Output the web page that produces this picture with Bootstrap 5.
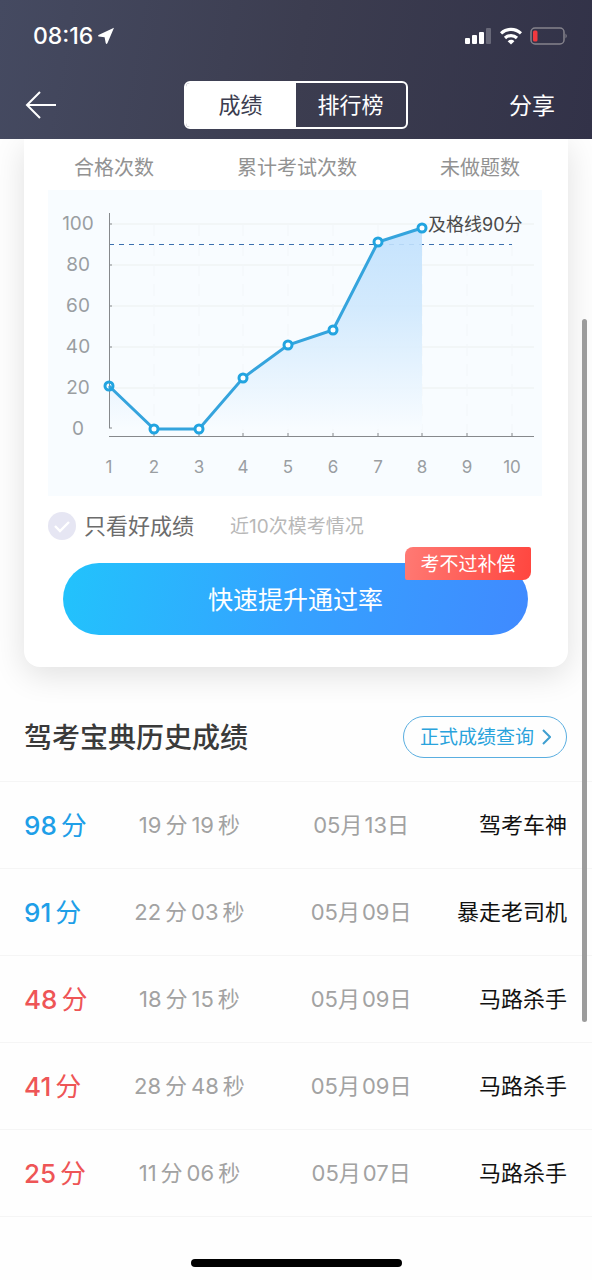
<!DOCTYPE html>
<html lang="zh-CN">
<head>
<meta charset="utf-8">
<meta name="viewport" content="width=device-width, initial-scale=1">
<title>成绩</title>
<link href="https://cdn.jsdelivr.net/npm/bootstrap@5.3.0/dist/css/bootstrap.min.css" rel="stylesheet">
<style>
  body { font-family: Inter, "Noto Sans CJK SC", sans-serif; background: #fefefe; color: #111; overflow-x: hidden; }
  .app-header { background: linear-gradient(100deg, #454a61 0%, #3c3d50 50%, #323248 100%); color: #fff; z-index: 3; }
  .status-bar { height: 72px; padding: 0 24px 0 33px; font-size: 23px; font-weight: 500; }
  .title-bar { height: 67px; padding: 0 26px 2px 25px; font-size: 23px; }
  .title-side { flex: 1 1 0; }
  .title-side a { color: #fff; }
  .title-side svg { display: block; }
  .share-link { display: block; padding-top: 3px; margin-right: 11px; }
  .seg-tabs { border: 2px solid #fff; border-radius: 6px; overflow: hidden; }
  .seg-tabs button { width: 110px; height: 44px; border: 0; background: transparent; color: #fff; font-size: 22px; line-height: 44px; padding: 0; }
  .seg-tabs button.is-active { background: #fff; color: #3c3d50; }
  .score-card { margin: 0 24px; padding: 8px 26px 32px 24px; background: #fff; border-radius: 0 0 16px 16px; box-shadow: 0 8px 32px rgba(0,0,0,.12); }
  .stat-heads { font-size: 20px; line-height: 42px; color: #929292; padding: 0 22px 0 26px; margin-bottom: 1px; }
  .trend-chart { display: block; width: 100%; height: auto; background: #f8fcff; }
  .filter-row { height: 60px; }
  .filter-row label { font-size: 22px; color: #6c6c6c; margin-left: 8px; }
  .filter-row .hint { font-size: 19px; color: #b8b8b8; margin-left: 36px; padding-top: 2px; }
  .round-check { appearance: none; width: 28px; height: 28px; margin: 0; border-radius: 50%; background: #e6e6f3 url("data:image/svg+xml,%3Csvg xmlns='http://www.w3.org/2000/svg' viewBox='0 0 28 28'%3E%3Cpath d='M7 14l5 5 9-9' fill='none' stroke='%23fff' stroke-width='2.4'/%3E%3C/svg%3E"); }
  .round-check:checked { background-color: #22a7f0; }
  .cta-wrap { margin: 7px 14px 0 15px; }
  .btn-cta, .btn-cta:hover { border: 0; border-radius: 36px; height: 72px; padding: 4px 0 0; font-size: 25px; color: #fff; background: linear-gradient(100deg, #22c3fc 0%, #35a2ff 50%, #408aff 100%); }
  .cta-flag { position: absolute; right: -3px; top: -16px; width: 126px; height: 33px; line-height: 35px; font-size: 19px; color: #fff; border-radius: 8px 2px 8px 2px; background: linear-gradient(100deg, #ff7a74, #ff463f); text-align: center; }
  .history-head { padding: 48px 25px 22px 24px; }
  .history-head h2 { font-size: 28px; font-weight: 500; line-height: 42px; padding-top: 2px; color: #3a3a3a; }
  .btn-query { display: flex; align-items: center; gap: 8px; height: 42px; padding: 2px 15px 0 16px; border: 1px solid #5aaee0; border-radius: 21px; color: #2aa3dc; font-size: 19px; text-decoration: none; }
  .btn-query svg { margin-bottom: 2px; }
  .history-table { width: 100%; table-layout: fixed; border-top: 1px solid #f5f5f5; font-size: 22px; }
  .history-table td { height: 87px; padding: 1px 0 0; border-bottom: 1px solid #f5f5f5; vertical-align: middle; white-space: nowrap; }
  .history-table td:first-child { padding-left: 24px; font-size: 26px; }
  .history-table td:last-child { padding-right: 25px; text-align: right; }
  .history-table .meta { color: #a2a2a2; text-align: center; }
  .history-table b { font-weight: inherit; margin-right: 4px; }
  .history-table i { font-style: normal; margin-right: 4px; }
  .history-table .day { margin-right: 2px; }
  .c-score { width: 19%; } .c-time { width: 26%; } .c-date { width: 32%; }
  .pass { color: #1e9fe8; } .fail { color: #ee5556; }
  .pass b, .fail b { font-weight: 500; }
  .home-bar { width: 211px; height: 8px; border-radius: 4px; background: #000; margin: 42px auto 12px; }
  .scroll-thumb { position: absolute; right: 5px; top: 319px; width: 5px; height: 703px; border-radius: 3px; background: #9c9c9c; z-index: 2; }
</style>
</head>
<body>
<div class="position-relative">
<header class="app-header position-relative">
  <div class="status-bar d-flex align-items-center justify-content-between">
    <div class="d-flex align-items-center gap-1">
      <span>08:16</span>
      <svg width="18" height="18" viewBox="0 0 18 18" aria-hidden="true"><path d="M17 .8L1.500 8Q.3 9.300 1.800 9.600L7.600 10.200L8.700 16Q9.300 17.800 10.400 16.200z" fill="#fff"/></svg>
    </div>
    <div class="d-flex align-items-center gap-2">
      <svg width="27" height="18" viewBox="0 0 27 18" fill="#fff" aria-hidden="true"><rect x="0" y="11" width="5" height="6" rx="1"/><rect x="7" y="8" width="5" height="9" rx="1"/><rect x="14" y="5" width="5" height="12" rx="1"/><rect x="21" y="1" width="5" height="16" rx="1" opacity=".25"/></svg>
      <svg width="22" height="18" viewBox="0 0 22 18" fill="none" stroke="#fff" stroke-width="3.200" aria-hidden="true"><path d="M1 6.400C6.800 .9 15.200 .9 21 6.400"/><path d="M5 11c3.400-3.200 8.600-3.200 12 0"/><path d="M7.600 14.200c1.900-1.900 4.900-1.900 6.800 0L11 17.600z" fill="#fff" stroke="none"/></svg>
      <svg width="38" height="18" viewBox="0 0 38 18" fill="none" aria-hidden="true"><rect x="1" y="1" width="33" height="16" rx="4" stroke="#85838c" stroke-width="1.500"/><rect x="3" y="3.500" width="4.500" height="11" rx="1.500" fill="#f0393f"/><path d="M35.500 6.500q2.500 2.500 0 5z" fill="#85838c"/></svg>
    </div>
  </div>
  <nav class="title-bar d-flex align-items-center">
    <div class="title-side"><a href="#" aria-label="返回"><svg width="32" height="28" viewBox="0 0 32 28" fill="none" stroke="#fff" stroke-width="2" aria-hidden="true"><path d="M15 1L2 14l13 13M2 14h29"/></svg></a></div>
    <div class="seg-tabs d-flex">
      <button type="button" class="is-active">成绩</button>
      <button type="button">排行榜</button>
    </div>
    <div class="title-side text-end"><a href="#" class="share-link text-decoration-none">分享</a></div>
  </nav>
</header>

<main>
  <section class="score-card">
    <div class="stat-heads d-flex justify-content-between"><span>合格次数</span><span>累计考试次数</span><span>未做题数</span></div>
    <svg class="trend-chart" viewBox="0 0 494 306" role="img" aria-label="近10次模考成绩">
      <defs><linearGradient id="area" x1="0" y1="0" x2="0" y2="1"><stop offset="0" stop-color="#bfe0fd"/><stop offset=".4" stop-color="#cfe8fd"/><stop offset="1" stop-color="#f8fcff"/></linearGradient></defs>
      <path d="M61 34H486M61 75H486M61 116H486M61 157H486M61 198H486" stroke="#eff3f5" stroke-width="1.500"/>
      <path d="M106 34V246M151 34V246M195 34V246M240 34V246M285 34V246M330 34V246M374 34V246M419 34V246M464 34V246" stroke="#f2f6f9" stroke-dasharray="12 8"/>
      <path d="M61 54.500H464" stroke="#3a6fae" stroke-dasharray="5 5"/>
      <path d="M61 196L106 239H151L195 188L240 155L285 140L330 52L374 38V239H61z" fill="url(#area)" fill-opacity=".9"/>
      <path d="M61.500 23V238M61 246.500H486M61 34h3M61 75h3M61 116h3M61 157h3M61 198h3M61 238h3M195 246v-3M240 246v-3M285 246v-3M330 246v-3M374 246v-3M419 246v-3M464 246v-3M106 246v-3M151 246v-3" fill="none" stroke="#86898c"/>
      <path d="M61 196L106 239H151L195 188L240 155L285 140L330 52L374 38" fill="none" stroke="#35a4dd" stroke-width="3"/>
      <g fill="#fff" stroke="#22a4e0" stroke-width="3"><circle cx="61" cy="196" r="4" fill="none"/><circle cx="106" cy="239" r="4"/><circle cx="151" cy="239" r="4"/><circle cx="195" cy="188" r="4"/><circle cx="240" cy="155" r="4"/><circle cx="285" cy="140" r="4"/><circle cx="330" cy="52" r="4"/><circle cx="374" cy="38" r="4"/></g>
      <g font-size="19" fill="#9a9ea2" text-anchor="middle"><text x="30" y="40">100</text><text x="30" y="81">80</text><text x="30" y="122">60</text><text x="30" y="163">40</text><text x="30" y="204">20</text><text x="30" y="245">0</text></g>
      <g font-size="17" fill="#9a9ea2" text-anchor="middle"><text x="61" y="283">1</text><text x="106" y="283">2</text><text x="151" y="283">3</text><text x="195" y="283">4</text><text x="240" y="283">5</text><text x="285" y="283">6</text><text x="330" y="283">7</text><text x="374" y="283">8</text><text x="419" y="283">9</text><text x="464" y="283">10</text></g>
      <text x="380" y="41" font-size="18" fill="#4a4a4a">及格线90分</text>
    </svg>
    <div class="filter-row d-flex align-items-center">
      <input class="round-check" type="checkbox" id="goodOnly"><label for="goodOnly">只看好成绩</label>
      <span class="hint">近10次模考情况</span>
    </div>
    <div class="cta-wrap position-relative">
      <button type="button" class="btn btn-cta w-100">快速提升通过率</button>
      <span class="cta-flag">考不过补偿</span>
    </div>
  </section>

  <section>
    <div class="history-head d-flex align-items-center justify-content-between">
      <h2 class="m-0">驾考宝典历史成绩</h2>
      <a class="btn-query" href="#">正式成绩查询<svg width="9" height="16" viewBox="0 0 9 16" fill="none" stroke="#3f9fd0" stroke-width="2" aria-hidden="true"><path d="M1 1l7 7-7 7"/></svg></a>
    </div>
    <table class="history-table">
      <colgroup><col class="c-score"><col class="c-time"><col class="c-date"><col></colgroup>
      <tbody>
        <tr><td class="pass"><b>98</b>分</td><td class="meta"><b>19</b><i>分</i><b>19</b>秒</td><td class="meta">05<span class="day">月</span>13日</td><td>驾考车神</td></tr>
        <tr><td class="pass"><b>91</b>分</td><td class="meta"><b>22</b><i>分</i><b>03</b>秒</td><td class="meta">05<span class="day">月</span>09日</td><td>暴走老司机</td></tr>
        <tr><td class="fail"><b>48</b>分</td><td class="meta"><b>18</b><i>分</i><b>15</b>秒</td><td class="meta">05<span class="day">月</span>09日</td><td>马路杀手</td></tr>
        <tr><td class="fail"><b>41</b>分</td><td class="meta"><b>28</b><i>分</i><b>48</b>秒</td><td class="meta">05<span class="day">月</span>09日</td><td>马路杀手</td></tr>
        <tr><td class="fail"><b>25</b>分</td><td class="meta"><b>11</b><i>分</i><b>06</b>秒</td><td class="meta">05<span class="day">月</span>07日</td><td>马路杀手</td></tr>
      </tbody>
    </table>
  </section>
</main>
<div class="home-bar"></div>
<div class="scroll-thumb"></div>
</div>
<script src="https://cdn.jsdelivr.net/npm/bootstrap@5.3.0/dist/js/bootstrap.bundle.min.js"></script>
</body>
</html>
